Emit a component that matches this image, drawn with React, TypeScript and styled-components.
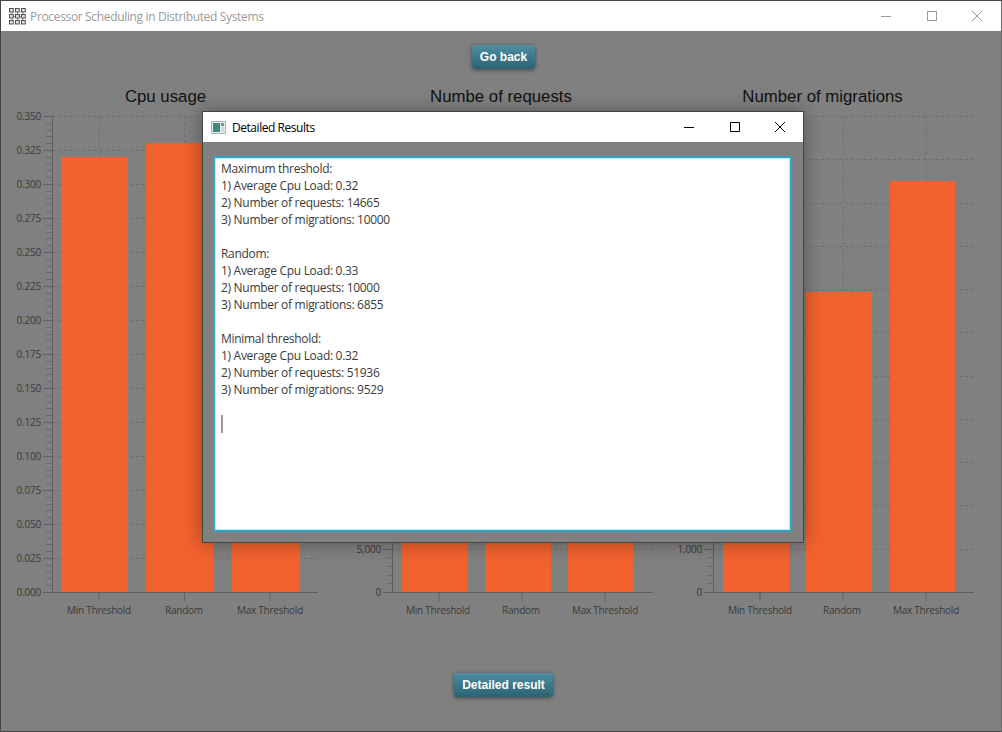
import styled, { createGlobalStyle } from "styled-components";

const GlobalStyle = createGlobalStyle`
  html, body {
    margin: 0;
    padding: 0;
    background: #808080;
  }
`;

const UI_FONT = `"Open Sans", "Noto Sans", sans-serif`;
const CHART_TOP = 107;
const CHART_HEIGHT = 523;
const BASE_Y = 592;
const TOP_Y = 116;

type ChartData = {
  title: string;
  left: number;
  width: number;
  axisX: number;
  axisEnd: number;
  ticks: number[];
  labels: number[];
  yLabels: string[];
  bars: { x: number; w: number; top: number }[];
};

const CATEGORIES = ["Min Threshold", "Random", "Max Threshold"];

// the dialog covers everything above the second tick in the two right charts
const lowTicks = (count: number, size: number) =>
  Array.from({ length: count }, (_, i) =>
    i < 2 ? (i * size).toLocaleString("en-US") : "",
  );

const CHARTS: ChartData[] = [
  {
    title: "Cpu usage",
    left: 1,
    width: 329,
    axisX: 52,
    axisEnd: 318,
    ticks: [99, 184.5, 270],
    labels: [99, 184, 270],
    yLabels: Array.from({ length: 15 }, (_, i) => (i * 0.025).toFixed(3)),
    bars: [
      { x: 61, w: 67, top: 157 },
      { x: 146, w: 68, top: 143 },
      { x: 232, w: 68, top: 157 },
    ],
  },
  {
    title: "Numbe of requests",
    left: 330,
    width: 342,
    axisX: 392,
    axisEnd: 653,
    ticks: [439, 522, 605],
    labels: [438, 521, 605],
    yLabels: lowTicks(12, 5000),
    bars: [
      { x: 402, w: 66, top: 146 },
      { x: 485, w: 66, top: 505 },
      { x: 568, w: 66, top: 465 },
    ],
  },
  {
    title: "Number of migrations",
    left: 672,
    width: 301,
    axisX: 713,
    axisEnd: 974,
    ticks: [760, 843, 926],
    labels: [760, 842, 926],
    yLabels: lowTicks(12, 1000),
    bars: [
      { x: 723, w: 66, top: 160 },
      { x: 806, w: 66, top: 292 },
      { x: 890, w: 65, top: 181 },
    ],
  },
];

const RESULTS = `Maximum threshold:
1) Average Cpu Load: 0.32
2) Number of requests: 14665
3) Number of migrations: 10000

Random:
1) Average Cpu Load: 0.33
2) Number of requests: 10000
3) Number of migrations: 6855

Minimal threshold:
1) Average Cpu Load: 0.32
2) Number of requests: 51936
3) Number of migrations: 9529

`;

export default function App() {
  return (
    <>
      <GlobalStyle />
      <Window>
        <TitleBar>
          <AppIcon />
          <TitleText>Processor Scheduling in Distributed Systems</TitleText>
          <WindowButtons color="#999999" />
        </TitleBar>
        <Body>
          <ActionButton>Go back</ActionButton>
          <ChartRow>
            {CHARTS.map((chart) => (
              <Chart key={chart.title} chart={chart} />
            ))}
          </ChartRow>
          <ActionButton>Detailed result</ActionButton>
        </Body>
        <Dialog>
          <DialogBar>
            <DialogIcon />
            <DialogTitle>Detailed Results</DialogTitle>
            <WindowButtons color="#000000" />
          </DialogBar>
          <DialogBody>
            <ResultField>
              {RESULTS}
              <Caret />
            </ResultField>
          </DialogBody>
        </Dialog>
      </Window>
    </>
  );
}

function Chart({ chart }: { chart: ChartData }) {
  const { axisX, axisEnd, yLabels } = chart;
  const step = (BASE_Y - TOP_Y) / (yLabels.length - 1);

  return (
    <ChartColumn $width={chart.width}>
      <ChartTitle>{chart.title}</ChartTitle>
      <Plot
        width={chart.width}
        height={CHART_HEIGHT}
        viewBox={`${chart.left} ${CHART_TOP} ${chart.width} ${CHART_HEIGHT}`}
      >
        {yLabels.map((label, i) => {
          const y = Math.round(BASE_Y - i * step) + 0.5;
          return (
            <g key={i}>
              {i > 0 && <GridLine x1={axisX} x2={axisEnd} y1={y} y2={y} />}
              <AxisLine x1={axisX - 9} x2={axisX} y1={y} y2={y} />
              {label && (
                <YLabel x={axisX - 11} y={y + 3.5}>
                  {label}
                </YLabel>
              )}
              {i < yLabels.length - 1 &&
                [1, 2, 3, 4].map((n) => {
                  const my = Math.round(BASE_Y - (i + n / 5) * step) + 0.5;
                  return <MinorTick key={n} x1={axisX - 6} x2={axisX} y1={my} y2={my} />;
                })}
            </g>
          );
        })}
        {chart.ticks.map((x) => (
          <GridLine key={x} x1={x} x2={x} y1={TOP_Y} y2={BASE_Y} />
        ))}
        {chart.bars.map((bar) => (
          <rect
            key={bar.x}
            x={bar.x}
            y={bar.top}
            width={bar.w}
            height={BASE_Y - bar.top}
            fill="#f1622e"
          />
        ))}
        <AxisLine x1={axisX + 0.5} x2={axisX + 0.5} y1={TOP_Y} y2={BASE_Y + 1} />
        <AxisLine x1={axisX} x2={axisEnd} y1={BASE_Y + 0.5} y2={BASE_Y + 0.5} />
        {chart.ticks.map((x) => (
          <AxisLine key={x} x1={x} x2={x} y1={BASE_Y} y2={BASE_Y + 9} />
        ))}
        {CATEGORIES.map((name, i) => (
          <XLabel key={name} x={chart.labels[i]} y={BASE_Y + 22}>
            {name}
          </XLabel>
        ))}
      </Plot>
    </ChartColumn>
  );
}

function WindowButtons({ color }: { color: string }) {
  return (
    <ButtonGroup>
      <svg width="12" height="12" viewBox="0 0 12 12">
        <path d="M1 6.5h10" stroke={color} fill="none" />
      </svg>
      <svg width="12" height="12" viewBox="0 0 12 12">
        <path d="M1.5 1.5h9v9h-9z" stroke={color} fill="none" />
      </svg>
      <svg width="12" height="12" viewBox="0 0 12 12">
        <path d="M1 1l10 10M11 1L1 11" stroke={color} fill="none" />
      </svg>
    </ButtonGroup>
  );
}

function AppIcon() {
  const cols = [0, 6, 12];
  const rows = [0, 6, 12];
  return (
    <IconSlot width="17" height="17" viewBox="0 0 17 17">
      <path d="M3 3v12M8.5 3v12M14 3v12M1 8.5h15" stroke="#777" strokeWidth="0.8" />
      {rows.map((y) =>
        cols.map((x) => (
          <rect
            key={`${x}-${y}`}
            x={x + 0.5}
            y={y + 0.5}
            width="3.8"
            height="3.5"
            fill="#ddd"
            stroke="#444"
            strokeWidth="0.9"
          />
        )),
      )}
    </IconSlot>
  );
}

function DialogIcon() {
  return (
    <IconSlot width="15" height="15" viewBox="0 0 15 15">
      <rect x="0.5" y="1.5" width="14" height="12" fill="#e8eeee" stroke="#a9b5b5" />
      <rect x="2" y="3" width="7" height="9" fill="#3f8a80" />
      <rect x="10" y="3" width="3" height="3" fill="#7d8f90" />
      <rect x="10" y="7" width="3" height="5" fill="#c8d6d6" />
    </IconSlot>
  );
}

const Window = styled.div`
  position: relative;
  display: flex;
  flex-direction: column;
  width: 1002px;
  height: 732px;
  box-sizing: border-box;
  border: 1px solid #444444;
  border-right-color: #6a6a6a;
  background: #808080;
  overflow: hidden;
`;

const TitleBar = styled.header`
  display: flex;
  align-items: center;
  flex: none;
  height: 30px;
  padding: 0 18px 0 8px;
  background: #ffffff;
`;

const IconSlot = styled.svg`
  flex: none;
`;

const TitleText = styled.span`
  flex: 1;
  margin-left: 4px;
  font: 12px ${UI_FONT};
  letter-spacing: -0.34px;
  color: #9a9a9a;
`;

const ButtonGroup = styled.div`
  display: flex;
  align-items: center;
  gap: 33.5px;
`;

const Body = styled.main`
  display: flex;
  flex: 1;
  flex-direction: column;
  align-items: center;
  padding-top: 14px;
`;

const ActionButton = styled.button`
  height: 24px;
  margin-left: 5px;
  padding: 0 8px;
  border: none;
  border-radius: 3px;
  background: linear-gradient(#4f8fa1, #2b6273);
  box-shadow: 0 1px 4px rgba(0, 0, 0, 0.45);
  font: bold 12px "Liberation Sans", Arial, sans-serif;
  color: #ffffff;
`;

const ChartRow = styled.section`
  display: flex;
  align-self: stretch;
  margin-top: 17px;
  margin-bottom: 43px;
`;

const ChartColumn = styled.div<{ $width: number }>`
  display: flex;
  flex-direction: column;
  flex: none;
  width: ${(props) => props.$width}px;
`;

const ChartTitle = styled.h2`
  height: 21px;
  margin: 0;
  font: 400 16.8px/22px "Liberation Sans", Arial, sans-serif;
  text-align: center;
  color: #111111;
`;

const Plot = styled.svg`
  display: block;
  overflow: visible;
`;

const GridLine = styled.line`
  stroke: #6e6e6e;
  stroke-dasharray: 3 3;
`;

const AxisLine = styled.line`
  stroke: #5f5f5f;
`;

const MinorTick = styled.line`
  stroke: #6b6b6b;
`;

const YLabel = styled.text`
  font: 10px ${UI_FONT};
  letter-spacing: -0.2px;
  text-anchor: end;
  fill: #3a3a3a;
`;

const XLabel = styled.text`
  font: 10px ${UI_FONT};
  letter-spacing: -0.25px;
  text-anchor: middle;
  fill: #3a3a3a;
`;

const Dialog = styled.section`
  position: absolute;
  left: 201px;
  top: 110px;
  display: flex;
  flex-direction: column;
  width: 602px;
  height: 432px;
  box-sizing: border-box;
  border: 1px solid #444444;
  background: #808080;
  box-shadow: 0 0 18px rgba(0, 0, 0, 0.35);
`;

const DialogBar = styled.header`
  display: flex;
  align-items: center;
  flex: none;
  height: 30px;
  padding: 0 17px 0 8px;
  background: #ffffff;
`;

const DialogTitle = styled.span`
  flex: 1;
  margin-left: 6px;
  font: 12px ${UI_FONT};
  letter-spacing: -0.45px;
  color: #000000;
`;

const DialogBody = styled.div`
  display: flex;
  flex: 1;
  padding: 14px 11px 10px 10px;
`;

const ResultField = styled.div`
  flex: 1;
  box-sizing: border-box;
  padding: 2px 6px;
  border: 2px solid #2fa5c3;
  outline: 1px solid rgba(170, 238, 250, 0.9);
  outline-offset: -3px;
  background: #ffffff;
  font: 12px/17px ${UI_FONT};
  letter-spacing: -0.3px;
  white-space: pre-wrap;
  color: #3a3a3a;
`;

const Caret = styled.span`
  display: inline-block;
  width: 1.5px;
  height: 18px;
  vertical-align: -4px;
  background: #999999;
`;
